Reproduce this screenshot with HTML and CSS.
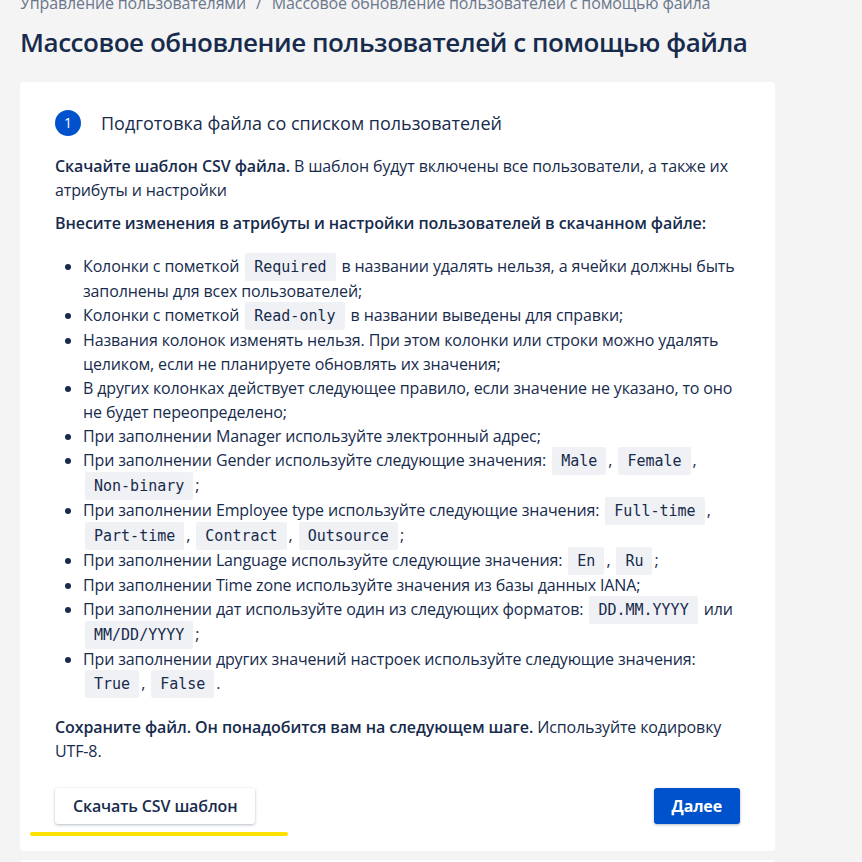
FILE: index.html
```html
<!DOCTYPE html>
<html lang="ru">
<head>
    <meta charset="UTF-8">
    <title>Массовое обновление пользователей с помощью файла</title>
    <link rel="stylesheet" href="styles.css">
</head>
<body>

    <div class="page">
        <div class="crumbs">Управление пользователями <span class="sep">/</span> Массовое обновление пользователей с помощью файла</div>
        <h1>Массовое обновление пользователей с помощью файла</h1>

        <div class="card">
            <div class="step">
                <div class="num">1</div>
                <div class="step-title">Подготовка файла со списком пользователей</div>
            </div>

            <p><b>Скачайте шаблон CSV файла.</b> В шаблон будут включены все пользователи, а также их атрибуты и настройки</p>
            <p><b>Внесите изменения в атрибуты и настройки пользователей в скачанном файле:</b></p>

            <ul>
                <li>Колонки с пометкой <code>Required</code> в названии удалять нельзя, а ячейки должны быть заполнены для всех пользователей;</li>
                <li>Колонки с пометкой <code>Read-only</code> в названии выведены для справки;</li>
                <li>Названия колонок изменять нельзя. При этом колонки или строки можно удалять целиком, если не планируете обновлять их значения;</li>
                <li>В других колонках действует следующее правило, если значение не указано, то оно не будет переопределено;</li>
                <li>При заполнении Manager используйте электронный адрес;</li>
                <li>При заполнении Gender используйте следующие значения: <code>Male</code>, <code>Female</code>, <code>Non-binary</code>;</li>
                <li>При заполнении Employee type используйте следующие значения: <code>Full-time</code>, <code>Part-time</code>, <code>Contract</code>, <code>Outsource</code>;</li>
                <li>При заполнении Language используйте следующие значения: <code>En</code>, <code>Ru</code>;</li>
                <li>При заполнении Time zone используйте значения из базы данных IANA;</li>
                <li>При заполнении дат используйте один из следующих форматов: <code>DD.MM.YYYY</code> или <code>MM/DD/YYYY</code>;</li>
                <li>При заполнении других значений настроек используйте следующие значения: <code>True</code>, <code>False</code>.</li>
            </ul>

            <p><b>Сохраните файл. Он понадобится вам на следующем шаге.</b> Используйте кодировку UTF-8.</p>

            <div class="actions">
                <button class="btn">Скачать CSV шаблон</button>
                <button class="btn primary">Далее</button>
                <div class="mark"></div>
            </div>
        </div>

        <div class="card next"></div>
    </div>

</body>
</html>
```

FILE: styles.css
```css
* {box-sizing: border-box}
body {
    margin: 0;
    background-color: #f4f4f4;
    font: 16px/24px "Open Sans", sans-serif;
    letter-spacing: -0.13px;
    color: #172b4d;
}
.page {padding: 0 20px; width: 795px}

/* ----- En-tête ----- */

.crumbs {
    color: #6b778c;
    margin-top: -9px;
}
.sep {margin: 0 6px}

h1 {
    font-size: 26px;
    font-weight: 600;
    letter-spacing: -0.45px;
    line-height: 34px;
    margin: 10px 0 23px;
}

/* ----- Carte ----- */

.card {
    background-color: #fff;
    border-radius: 4px;
    padding: 28px 35px 27px;
}
.card.next {margin-top: 9px; height: 40px; padding: 0}

.step {
    display: flex;
    align-items: center;
    gap: 20px;
    margin-bottom: 18px;
}
.num {
    width: 26px;
    height: 26px;
    border-radius: 50%;
    background-color: #0052cc;
    color: #fff;
    font-size: 14px;
    display: flex;
    justify-content: center;
    align-items: center;
}
.step-title {font-size: 18px; letter-spacing: 0}

p {margin: 0 0 9px}
b {font-weight: 600; letter-spacing: -0.08px}

ul {
    margin: 19px 0 19px;
    padding-left: 28px;
}

code {
    font-family: "DejaVu Sans Mono", monospace;
    font-size: 15px;
    letter-spacing: 0;
    background-color: #f0f1f4;
    padding: 5px 9px;
    margin: 0 2px;
    border-radius: 2px;
}

/* ----- Boutons ----- */

.actions {
    display: flex;
    justify-content: space-between;
    margin-top: 25px;
    position: relative;
}
.btn {
    font: 600 16px "Open Sans", sans-serif;
    letter-spacing: -0.13px;
    color: #172b4d;
    background-color: #fff;
    border: 0;
    border-radius: 3px;
    height: 36px;
    padding: 0 18px;
    box-shadow: 0 1px 3px rgba(9, 30, 66, 0.3);
}
.primary {
    background-color: #0052cc;
    color: #fff;
    font-weight: 700;
}
.mark {
    position: absolute;
    left: -25px;
    top: 44px;
    width: 258px;
    height: 4px;
    border-radius: 2px;
    background-color: #ffe100;
}
```
